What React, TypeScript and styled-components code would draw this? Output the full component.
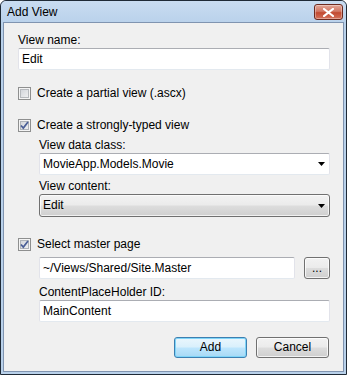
import React, { ReactElement } from 'react'
import styled, { createGlobalStyle } from 'styled-components'

const GlobalStyle = createGlobalStyle`
  html, body {
    margin: 0;
    padding: 0;
    background: #ffffff;
  }
  body {
    font-family: 'Liberation Sans', Arial, sans-serif;
    font-size: 12px;
    color: #000;
  }
  * {
    box-sizing: border-box;
  }
`

const Window = styled.div(() => ({
  width: 347,
  height: 375,
  border: '1px solid #1f2a36',
  borderRadius: '6px 6px 0 0',
  background: '#b9d1ea',
  display: 'flex',
  flexDirection: 'column',
  overflow: 'hidden',
}))

const TitleBar = styled.div(() => ({
  height: 21,
  flexShrink: 0,
  display: 'flex',
  alignItems: 'flex-start',
  justifyContent: 'space-between',
  background: 'linear-gradient(#c9dcf1, #bad2eb)',
  borderRadius: '5px 5px 0 0',
}))

const Title = styled.div(() => ({
  paddingLeft: 6,
  paddingTop: 4,
  fontSize: 12,
  lineHeight: '15px',
  color: '#000',
}))

const CloseButton = styled.div(() => ({
  width: 29,
  height: 16,
  marginTop: 3,
  marginRight: 3,
  borderRadius: 3,
  border: '1px solid #6d2a1f',
  background: 'linear-gradient(#e3a697 0%, #d17865 45%, #c24a31 55%, #d4735d 100%)',
  boxShadow: 'inset 0 0 0 1px rgba(255,255,255,0.35)',
  display: 'flex',
  alignItems: 'center',
  justifyContent: 'center',
}))

const Frame = styled.div(() => ({
  flex: 1,
  display: 'flex',
  padding: '0 2px 2px 2px',
}))

const Content = styled.div(() => ({
  flex: 1,
  display: 'flex',
  flexDirection: 'column',
  background: '#f0f0f0',
  border: '1px solid #8094b0',
  padding: '10px 13px 0 14px',
}))

const Label = styled.div<{ $gap?: number }>(({ $gap = 0 }) => ({
  height: 15,
  lineHeight: '15px',
  marginTop: $gap,
  whiteSpace: 'nowrap',
}))

const TextBox = styled.div<{ $grow?: boolean }>(({ $grow }) => ({
  height: 22,
  flex: $grow ? 1 : undefined,
  background: '#fff',
  borderStyle: 'solid',
  borderWidth: 1,
  borderColor: '#abadb3 #e2e3ea #e3e9ef #e2e3ea',
  borderRadius: 2,
  padding: '0 3px',
  display: 'flex',
  alignItems: 'center',
  lineHeight: '15px',
}))

const Combo = styled.div<{ $button?: boolean }>(({ $button }) => ({
  height: $button ? 23 : 22,
  background: $button ? 'linear-gradient(#f2f2f2 0%, #ebebeb 49%, #dddddd 51%, #cfcfcf 100%)' : '#fff',
  borderStyle: 'solid',
  borderWidth: 1,
  borderColor: $button ? '#707070' : '#abadb3 #e2e3ea #e3e9ef #e2e3ea',
  borderRadius: $button ? 3 : 2,
  boxShadow: $button ? 'inset 0 0 0 1px rgba(255,255,255,0.7)' : 'none',
  padding: '0 3px',
  display: 'flex',
  alignItems: 'center',
  justifyContent: 'space-between',
  lineHeight: '15px',
}))

const Arrow = styled.svg(() => ({
  width: 7,
  height: 4,
  marginRight: 1,
}))

const CheckRow = styled.label<{ $gap: number }>(({ $gap }) => ({
  height: 16,
  marginTop: $gap,
  display: 'flex',
  alignItems: 'center',
  gap: 6,
  lineHeight: '15px',
}))

const Box = styled.span<{ $checked?: boolean }>(({ $checked }) => ({
  width: 13,
  height: 13,
  flexShrink: 0,
  border: '1px solid #8e8f8f',
  background: '#f4f4f4',
  boxShadow: $checked
    ? 'inset 0 0 0 1px #f4f4f4, inset 0 0 0 2px #aeb3b9'
    : 'inset 0 0 0 1px #f4f4f4, inset 0 0 0 2px #b6b9bd',
  backgroundImage: $checked
    ? 'linear-gradient(135deg, #cbcfd5, #f5f6f7)'
    : 'linear-gradient(135deg, #cbcfd5, #f6f6f6)',
  display: 'flex',
  alignItems: 'center',
  justifyContent: 'center',
}))

const Indent = styled.div(() => ({
  paddingLeft: 21,
  display: 'flex',
  flexDirection: 'column',
}))

const BrowseRow = styled.div(() => ({
  marginTop: 5,
  display: 'flex',
  alignItems: 'center',
  gap: 9,
}))

const Button = styled.div<{ $default?: boolean; $width: number; $height: number }>(
  ({ $default, $width, $height }) => ({
    width: $width,
    height: $height,
    borderRadius: 3,
    border: $default ? '1px solid #3c7fb1' : '1px solid #707070',
    background: $default
      ? 'linear-gradient(#eaf6fd 0%, #d9f0fc 49%, #bee6fd 51%, #a7d9f5 100%)'
      : 'linear-gradient(#f2f2f2 0%, #ebebeb 49%, #dddddd 51%, #cfcfcf 100%)',
    boxShadow: $default ? 'inset 0 0 0 1px #7fd5f8' : 'inset 0 0 0 1px rgba(255,255,255,0.75)',
    display: 'flex',
    alignItems: 'center',
    justifyContent: 'center',
    lineHeight: '15px',
    flexShrink: 0,
  })
)

const ButtonRow = styled.div(() => ({
  marginTop: 15,
  display: 'flex',
  justifyContent: 'flex-end',
  gap: 9,
  paddingRight: 1,
}))

const DownArrow = (): ReactElement => (
  <Arrow viewBox="0 0 7 4">
    <path d="M0 0h7L3.5 4z" fill="#000" />
  </Arrow>
)

const CheckBox = ({ checked, label, gap }: { checked?: boolean; label: string; gap: number }): ReactElement => (
  <CheckRow $gap={gap}>
    <Box $checked={checked}>
      {checked && (
        <svg width="9" height="9" viewBox="0 0 9 9">
          <path d="M1 4.5l2.3 2.6L8 1" fill="none" stroke="#4a5f97" strokeWidth="1.7" />
        </svg>
      )}
    </Box>
    {label}
  </CheckRow>
)

export default function App(): ReactElement {
  return (
    <>
      <GlobalStyle />
      <Window>
        <TitleBar>
          <Title>Add View</Title>
          <CloseButton>
            <svg width="11" height="9" viewBox="0 0 11 9">
              <path d="M1 1l9 7M10 1L1 8" stroke="#fff" strokeWidth="2.2" strokeLinecap="square" />
            </svg>
          </CloseButton>
        </TitleBar>
        <Frame>
          <Content>
            <Label>View name:</Label>
            <TextBox>Edit</TextBox>
            <CheckBox label="Create a partial view (.ascx)" gap={15} />
            <CheckBox checked label="Create a strongly-typed view" gap={16} />
            <Indent>
              <Label $gap={5}>View data class:</Label>
              <Combo>
                MovieApp.Models.Movie
                <DownArrow />
              </Combo>
              <Label $gap={4}>View content:</Label>
              <Combo $button>
                Edit
                <DownArrow />
              </Combo>
            </Indent>
            <CheckBox checked label="Select master page" gap={19} />
            <Indent>
              <BrowseRow>
                <TextBox $grow>~/Views/Shared/Site.Master</TextBox>
                <Button $width={26} $height={22}>...</Button>
              </BrowseRow>
              <Label $gap={6}>ContentPlaceHolder ID:</Label>
              <TextBox>MainContent</TextBox>
            </Indent>
            <ButtonRow>
              <Button $default $width={73} $height={21}>Add</Button>
              <Button $width={73} $height={21}>Cancel</Button>
            </ButtonRow>
          </Content>
        </Frame>
      </Window>
    </>
  )
}
